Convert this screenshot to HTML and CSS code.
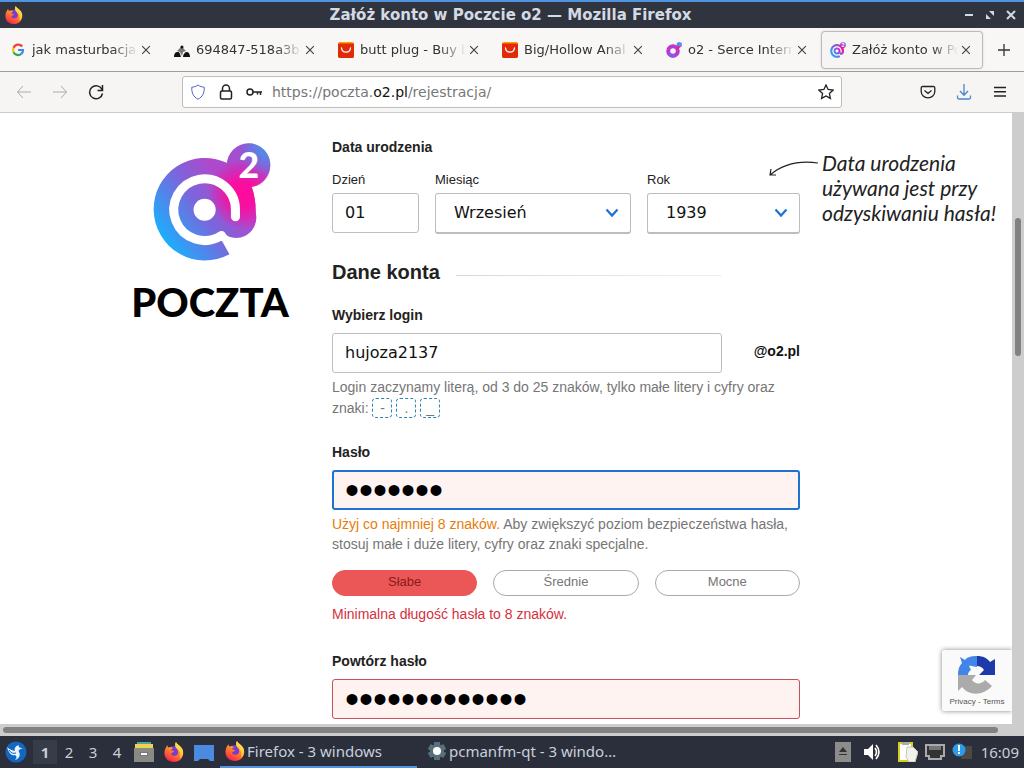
FILE: index.html
```html
<!DOCTYPE html>
<html lang="pl">
<head>
    <meta charset="utf-8">
    <title>Załóż konto w Poczcie o2</title>
    <link rel="stylesheet" href="styles.css">
</head>
<body>
    <!-- shared icons -->
    <svg width="0" height="0" class="defs" aria-hidden="true">
        <defs>
            <linearGradient id="ff-fire" x1="0.8" y1="0" x2="0.3" y2="1">
                <stop offset="0" stop-color="#fff04a"/>
                <stop offset="0.4" stop-color="#ff9a2a"/>
                <stop offset="0.8" stop-color="#ff4a3a"/>
                <stop offset="1" stop-color="#e8205a"/>
            </linearGradient>
            <linearGradient id="o2-base" gradientUnits="userSpaceOnUse" x1="120" y1="330" x2="400" y2="130">
                <stop offset="0" stop-color="#14b4ff"/>
                <stop offset="0.45" stop-color="#7a66dc"/>
                <stop offset="0.75" stop-color="#b048cc"/>
                <stop offset="1" stop-color="#a050d0"/>
            </linearGradient>
            <radialGradient id="o2-pink" gradientUnits="userSpaceOnUse" cx="368" cy="190" r="105">
                <stop offset="0" stop-color="#ff0a9c"/>
                <stop offset="0.4" stop-color="#ff0a9c" stop-opacity="0.9"/>
                <stop offset="1" stop-color="#ff0a9c" stop-opacity="0"/>
            </radialGradient>
            <radialGradient id="o2-blue" gradientUnits="userSpaceOnUse" cx="440" cy="50" r="85">
                <stop offset="0" stop-color="#3a9cf0"/>
                <stop offset="1" stop-color="#3a9cf0" stop-opacity="0"/>
            </radialGradient>
        </defs>
        <symbol id="firefox" viewBox="0 0 20 20">
            <circle cx="10" cy="11" r="7" fill="#7a3ccc"/>
            <path d="M12 0c1 3 6 4 7 9 1.200 6-3 11-9 11S0 16 .5 10C.7 7 2 5.500 3.500 3c0 1 .3 2 1 2.500C6 4.500 8 5 9 6.500c-1 .3-2 .8-2 2 1.500 0 3 .2 3 1.500-1 .5-3 .5-3 2 .5 2 5 2.500 6.500.5 1.500-2 .5-4.500-1-6C11 5 10.500 2 12 0z" fill="url(#ff-fire)"/>
            <path d="M12 0c1 3 6 4 7 9 .3 4-1 6-3 7.500 1-4 0-8-3-10C11 5 10.500 2 12 0z" fill="#ffe34a" opacity=".7"/>
        </symbol>
        <symbol id="close" viewBox="0 0 10 10">
            <path d="M1.200 1.200l7.600 7.600M8.800 1.200L1.200 8.800" stroke="#444" stroke-width="1.200" fill="none"/>
        </symbol>
        <symbol id="ali" viewBox="0 0 16 16">
            <rect width="16" height="16" rx="2" fill="#ff9a00"/>
            <path d="M0 1.500h16V14a2 2 0 0 1-2 2H2a2 2 0 0 1-2-2z" fill="#e02a08"/>
            <path d="M3.500 6c.5 5.500 8.500 5.500 9 0" stroke="#fff" stroke-width="1.300" fill="none" stroke-linecap="round"/>
        </symbol>
        <symbol id="chevron" viewBox="0 0 14 10">
            <path d="M1.500 1.500L7 7.500l5.500-6" stroke="#1d72d2" stroke-width="2.200" fill="none"/>
        </symbol>
        <symbol id="o2-at" viewBox="100 36 352 356">
            <g fill="url(#o2-base)">
                <path d="M328 370A153 153 0 1 1 322 98L395 172Q407 205 407 250A60 60 0 0 1 303 301V325z"/>
                <circle cx="385" cy="104" r="65"/>
            </g>
            <path d="M328 370A153 153 0 1 1 322 98A65 65 0 1 1 395 169Q407 205 407 250A60 60 0 0 1 303 301V325z" fill="url(#o2-pink)"/>
            <circle cx="385" cy="104" r="65" fill="url(#o2-blue)"/>
            <path d="M346 258V237A92 92 0 1 0 304 314" fill="none" stroke="#fff" stroke-width="27" stroke-linecap="round"/>
            <path d="M290 312l18-10 20 18-22 12z" fill="#fff"/>
            <circle cx="254" cy="237" r="33" fill="#fff"/>
            <text x="386" y="142" text-anchor="middle" class="logo-two">2</text>
        </symbol>
    </svg>

    <header class="titlebar">
        <svg class="title-icon"><use href="#firefox"/></svg>
        <span class="title">Załóż konto w Poczcie o2 — Mozilla Firefox</span>
        <div class="window-buttons">
            <button aria-label="Minimalizuj"><svg width="10" height="10"><path d="M1 5h8" stroke="#d3dae3" stroke-width="2"/></svg></button>
            <button aria-label="Maksymalizuj"><svg width="10" height="10" fill="#d3dae3"><path d="M4 1h5v5zM1 4v5h5z"/></svg></button>
            <button aria-label="Zamknij"><svg width="10" height="10"><path d="M1 1l8 8M9 1L1 9" stroke="#d3dae3" stroke-width="2"/></svg></button>
        </div>
    </header>

    <nav class="tabs">
        <div class="tab">
            <svg class="favicon" viewBox="0 0 16 16" fill="none" stroke-width="2.200">
                <path d="M12.200 4.500A5 5 0 0 0 3.600 5.800" stroke="#ea4335"/>
                <path d="M3.600 5.800a5 5 0 0 0 0 4.400" stroke="#fbbc05"/>
                <path d="M3.600 10.200a5 5 0 0 0 7.700 1.700" stroke="#34a853"/>
                <path d="M11.300 11.900A5 5 0 0 0 13 8H8" stroke="#4285f4"/>
            </svg>
            <span class="tab-label">jak masturbacja</span>
            <button class="tab-close" aria-label="Zamknij kartę"><svg><use href="#close"/></svg></button>
        </div>
        <div class="tab">
            <svg class="favicon" viewBox="0 0 16 16" fill="#111">
                <path d="M0 15c0-3 1-5 3.500-5S6 12 7 15zM9 15c0-3 2-5 4-5s3 3 3 5z"/>
                <path d="M7.500 3.500L9 6l3 3-3 1-1 4-2-4-3-1 3-3z" fill="#777"/>
                <circle cx="8" cy="5" r="1.500"/>
            </svg>
            <span class="tab-label">694847-518a3b</span>
            <button class="tab-close" aria-label="Zamknij kartę"><svg><use href="#close"/></svg></button>
        </div>
        <div class="tab">
            <svg class="favicon"><use href="#ali"/></svg>
            <span class="tab-label">butt plug - Buy b</span>
            <button class="tab-close" aria-label="Zamknij kartę"><svg><use href="#close"/></svg></button>
        </div>
        <div class="tab">
            <svg class="favicon"><use href="#ali"/></svg>
            <span class="tab-label">Big/Hollow Anal</span>
            <button class="tab-close" aria-label="Zamknij kartę"><svg><use href="#close"/></svg></button>
        </div>
        <div class="tab">
            <svg class="favicon" viewBox="0 0 16 16">
                <circle cx="7" cy="9" r="4.800" fill="none" stroke="#b53ccf" stroke-width="4"/>
                <path d="M3 12a5 5 0 0 0 6 1.500" fill="none" stroke="#8a5ae8" stroke-width="3.500"/>
                <circle cx="13.300" cy="2.800" r="2.700" fill="#5b8fe8"/>
                <path d="M11 7l2-3" stroke="#f0209c" stroke-width="3"/>
            </svg>
            <span class="tab-label">o2 - Serce Intern</span>
            <button class="tab-close" aria-label="Zamknij kartę"><svg><use href="#close"/></svg></button>
        </div>
        <div class="tab active">
            <svg class="favicon"><use href="#o2-at"/></svg>
            <span class="tab-label">Załóż konto w Po</span>
            <button class="tab-close" aria-label="Zamknij kartę"><svg><use href="#close"/></svg></button>
        </div>
        <button class="new-tab" aria-label="Nowa karta"><svg width="12" height="12"><path d="M6 0v12M0 6h12" stroke="#333" stroke-width="1.300"/></svg></button>
    </nav>

    <div class="toolbar">
        <div class="tools">
            <button class="tool" aria-label="Wstecz" disabled><svg viewBox="0 0 16 16" stroke="#aaa"><path d="M15 8H1.500M7 2L1.500 8 7 14"/></svg></button>
            <button class="tool" aria-label="Do przodu" disabled><svg viewBox="0 0 16 16" stroke="#aaa"><path d="M1 8h13.500M9 2l5.500 6L9 14"/></svg></button>
            <button class="tool" aria-label="Odśwież"><svg viewBox="0 0 16 16" stroke="#222" stroke-width="1.500"><path d="M14 5.500A6.500 6.500 0 1 0 14.500 9.500M14.500 1v5.500H9.500"/></svg></button>
        </div>
        <div class="urlbar">
            <svg viewBox="0 0 16 16" stroke="#5563c8"><path d="M8 1C6 2.500 4 3 1.800 3.200 1.500 9 3.500 13 8 15.200 12.500 13 14.500 9 14.200 3.200 12 3 10 2.500 8 1z"/></svg>
            <svg viewBox="0 0 16 16" stroke="#222" stroke-width="1.500"><rect x="2.500" y="7" width="11" height="8" rx="1.500"/><path d="M4.500 7V4.500a3.500 3.500 0 0 1 7 0V7"/></svg>
            <svg viewBox="0 0 16 16" stroke="#222" stroke-width="1.500"><circle cx="4" cy="8" r="3"/><path d="M7 8h9M11.500 8v2.500M14.500 8v3"/></svg>
            <span class="address">https://poczta.<b>o2.pl</b>/rejestracja/</span>
            <svg viewBox="0 0 16 16" stroke="#222" stroke-width="1.300"><path d="M8 1l2.100 4.500 5 .6-3.700 3.400 1 4.900L8 12l-4.400 2.400 1-4.900L.9 6.100l5-.6z"/></svg>
        </div>
        <div class="tools">
            <button class="tool" aria-label="Pocket"><svg viewBox="0 0 16 16" stroke="#222" stroke-width="1.300"><path d="M2.500 2.500h11a1.300 1.300 0 0 1 1.300 1.300V7.500a6.800 6.300 0 0 1-13.600 0V3.800a1.300 1.300 0 0 1 1.300-1.300zM4.500 6.500L8 9.500l3.500-3"/></svg></button>
            <button class="tool" aria-label="Pobrane"><svg viewBox="0 0 16 16" stroke="#4a84cc" stroke-width="1.300"><path d="M8 0v11M4 7l4 4.200L12 7M1.500 11.500v2a1.500 1.500 0 0 0 1.500 1.500h10a1.500 1.500 0 0 0 1.500-1.500v-2"/></svg></button>
            <button class="tool" aria-label="Menu"><svg viewBox="0 0 16 16" stroke="#222" stroke-width="1.500"><path d="M2 3.500h12M2 7.800h12M2 12.100h12"/></svg></button>
        </div>
    </div>

    <div class="viewport">
        <main class="page">
            <div class="brand">
                <svg class="brand-logo"><use href="#o2-at"/></svg>
                <span class="brand-name">POCZTA</span>
            </div>

            <form class="form">
                <fieldset class="birth">
                    <legend>Data urodzenia</legend>
                    <div class="birth-row">
                        <div class="birth-field day">
                            <label for="day">Dzień</label>
                            <input id="day" class="control" type="text" value="01">
                        </div>
                        <div class="birth-field month">
                            <label for="month">Miesiąc</label>
                            <div class="select">
                                <select id="month" class="control"><option>Wrzesień</option></select>
                                <svg><use href="#chevron"/></svg>
                            </div>
                        </div>
                        <div class="birth-field year">
                            <label for="year">Rok</label>
                            <div class="select">
                                <select id="year" class="control"><option>1939</option></select>
                                <svg><use href="#chevron"/></svg>
                            </div>
                        </div>
                    </div>
                </fieldset>

                <h2 class="section">Dane konta</h2>

                <div class="field">
                    <label for="login">Wybierz login</label>
                    <div class="login-row">
                        <input id="login" class="control" type="text" value="hujoza2137">
                        <span class="domain">@o2.pl</span>
                    </div>
                    <p class="hint">Login zaczynamy literą, od 3 do 25 znaków, tylko małe litery i cyfry oraz znaki: <kbd>-</kbd> <kbd>.</kbd> <kbd>_</kbd></p>
                </div>

                <div class="field">
                    <label for="password">Hasło</label>
                    <input id="password" class="control secret focused" type="password" value="1234567">
                    <p class="hint"><span class="warn">Użyj co najmniej 8 znaków.</span> Aby zwiększyć poziom bezpieczeństwa hasła, stosuj małe i duże litery, cyfry oraz znaki specjalne.</p>
                    <div class="strength">
                        <span class="weak">Słabe</span>
                        <span>Średnie</span>
                        <span>Mocne</span>
                    </div>
                    <p class="error">Minimalna długość hasła to 8 znaków.</p>
                </div>

                <div class="field">
                    <label for="repeat">Powtórz hasło</label>
                    <input id="repeat" class="control secret invalid" type="password" value="1234567890123">
                </div>
            </form>

            <aside class="note">
                <svg class="note-arrow" viewBox="0 0 50 18"><path d="M49 3Q20-1 1 15M2 9L1 15l6 0" fill="none" stroke="#222" stroke-width="1.200"/></svg>
                Data urodzenia<br>używana jest przy<br>odzyskiwaniu hasła!
            </aside>

            <div class="recaptcha">
                <svg viewBox="0 0 38 38">
                    <path d="M19 0C13 0 9 1 7 4L2 1l2 6C1 10 0 14 0 19h10c0-2 1-4 3-5l-2-4c3-1 5 1 8 1z" fill="#4285e8"/>
                    <path d="M19 0c6 0 10 2 13 6l5-3v16H21l5-5c-2-3-4-4-7-4z" fill="#1c3aa9"/>
                    <path d="M0 19v16l4-4c8 10 22 8 30-1l-7-6c-4 5-10 4-13 0l4-5z" fill="#ababab"/>
                </svg>
                <div><a href="#">Privacy</a> - <a href="#">Terms</a></div>
            </div>
        </main>
        <div class="scroll-y"><div class="thumb-y"></div></div>
        <div class="scroll-x"><div class="thumb-x"></div></div>
    </div>

    <footer class="taskbar">
        <button class="start" aria-label="Menu">
            <svg viewBox="0 0 22 22"><circle cx="11" cy="11" r="10.500" fill="#1268c0"/><path d="M2 6c3 3 5 3 8 4-1-2 0-5 4-6-1 2 0 3 4 3-3 1-5 2-4 4 2 3 0 7-4 8 2-2 2-4 0-5-3 1-6-1-8-8z" fill="#e8f4ff"/><path d="M4 9c2 3 4 4 7 3M15 10c3 2 2 5 0 7" stroke="#1268c0" fill="none"/></svg>
        </button>
        <div class="desktops">
            <button class="current">1</button><button>2</button><button>3</button><button>4</button>
        </div>
        <div class="launchers">
            <button aria-label="Pliki"><svg viewBox="0 0 20 20"><path d="M3 0h14v3H3z" fill="#49a6a0"/><path d="M1 2h18v5H1z" fill="#f3cf52"/><path d="M0 6h20v14H0z" fill="#888a85"/><path d="M6 10h8v4H6z" fill="#777"/><path d="M7 11h6v2H7z" fill="#fff"/></svg></button>
            <button aria-label="Firefox"><svg><use href="#firefox"/></svg></button>
            <button aria-label="Pulpit"><svg viewBox="0 0 20 20"><path d="M0 3h20v16h-4l-2-2H6l-2 2H0z" fill="#4a8be0"/></svg></button>
        </div>
        <button class="task active"><svg><use href="#firefox"/></svg>Firefox - 3 windows</button>
        <button class="task"><svg viewBox="0 0 20 20"><circle cx="10" cy="10" r="7" fill="#56707c"/><path d="M10 1v18M2.200 5.500l15.600 9M2.200 14.500l15.600-9" stroke="#56707c" stroke-width="6"/><circle cx="10" cy="10" r="4" fill="#fff"/></svg>pcmanfm-qt - 3 windo…</button>
        <div class="tray">
            <svg class="eject" viewBox="0 0 20 20"><path d="M2 0h16v20H2z" fill="#8c8c8c"/><path d="M6 10l4-5 4 5zM6 12h8v1H6z" fill="#333"/></svg>
            <svg class="volume" viewBox="0 0 20 20"><path d="M2 7h4l5-5v16l-5-5H2z" fill="#fff"/><path d="M13 6q3 4 0 8M14 3q6 7 0 14" stroke="#fff" stroke-width="1.600" fill="none"/></svg>
            <svg viewBox="0 0 20 20"><path d="M1 1h13v18H1z" fill="#fff" stroke="#d8ce22" stroke-width="2"/><path d="M4 0h7v3H4z" fill="#aaa"/><path d="M9 5h6l5 5-3 10h-6L8 15z" fill="#f2f2ec" stroke="#c8c8bc"/></svg>
            <svg viewBox="0 0 20 20"><path d="M1 3h18v11h-3v3H4v-3H1z" fill="#333" stroke="#aaa" stroke-width="2"/><path d="M5 4v4M7 4v4M9 4v4M11 4v4M13 4v4M15 4v4" stroke="#bbb"/></svg>
            <svg viewBox="0 0 20 20"><path d="M9 4h11v13H9z" fill="#4c4844"/><circle cx="7" cy="8" r="6.500" fill="#2d9be8"/><path d="M7 3v6M7 10v2" stroke="#fff" stroke-width="2"/></svg>
        </div>
        <time class="clock">16:09</time>
    </footer>
</body>
</html>
```
FILE: styles.css
```css
* {
    box-sizing: border-box;
}

html, body {
    height: 100%;
    margin: 0;
}

body {
    display: flex;
    flex-direction: column;
    overflow: hidden;
    font-family: "Liberation Sans", Arial, sans-serif;
    font-size: 14px;
    color: #222;
}

button {
    padding: 0;
    border: none;
    background: none;
    font: inherit;
    color: inherit;
    display: flex;
    align-items: center;
    justify-content: center;
}

.defs {
    position: absolute;
}

/* window */
.titlebar {
    flex: none;
    height: 28px;
    display: grid;
    grid-template-columns: 1fr auto 1fr;
    align-items: center;
    padding: 0 8px 0 5px;
    background: #2f343f;
    border-top: 2px solid #5294e2;
    font: bold 15px "DejaVu Sans", sans-serif;
    color: #d3dae3;
}

.title-icon {
    width: 18px;
    height: 18px;
}

.window-buttons {
    display: flex;
    justify-content: flex-end;
    gap: 11px;
}

.tabs {
    flex: none;
    height: 44px;
    display: flex;
    align-items: center;
    gap: 2px;
    padding: 0 1px;
    background: #f8f7f6;
    border-bottom: 1px solid #9b9b97;
    font: 13px "DejaVu Sans", sans-serif;
    color: #333;
}

.tab {
    flex: 0 1 162px;
    min-width: 0;
    height: 38px;
    display: flex;
    align-items: center;
    padding: 0 8px;
    border: 1px solid transparent;
    border-radius: 4px;
}

.tab.active {
    background: #f6f5f4;
    border-color: #bbb;
    box-shadow: 0 0 2px #ccc;
}

.favicon {
    flex: none;
    width: 16px;
    height: 16px;
    margin-right: 6px;
}

.tab-label {
    flex: 1;
    overflow: hidden;
    line-height: 20px;
    white-space: nowrap;
    -webkit-mask-image: linear-gradient(to left, transparent, #000 26px);
    mask-image: linear-gradient(to left, transparent, #000 26px);
}

.tab-close {
    width: 16px;
}

.tab-close svg {
    width: 10px;
    height: 10px;
}

.new-tab {
    flex: 1;
}

.toolbar {
    flex: none;
    height: 41px;
    display: flex;
    align-items: center;
    gap: 68px;
    padding: 0 6px;
    background: #f6f5f4;
    border-bottom: 1px solid #ccc;
}

.tools {
    display: flex;
}

.tool {
    width: 36px;
    height: 32px;
}

.tool svg, .urlbar svg {
    flex: none;
    width: 16px;
    height: 16px;
    fill: none;
}

.urlbar {
    flex: 1;
    height: 32px;
    display: flex;
    align-items: center;
    gap: 12px;
    padding: 0 7px;
    background: #fff;
    border: 1px solid #bdbdbb;
    border-radius: 3px;
    font: 14px "DejaVu Sans", sans-serif;
    color: #777;
}

.address {
    flex: 1;
    margin-left: -2px;
}

.address b {
    font-weight: normal;
    color: #111;
}

/* page and its scrollbars */
.viewport {
    flex: 1;
    min-height: 0;
    display: grid;
    grid-template: minmax(0, 1fr) 12px / minmax(0, 1fr) 12px;
    background: #cdcdcd;
}

.page {
    position: relative;
    overflow: hidden;
    display: flex;
    align-items: flex-start;
    padding-left: 132px;
    background: #fff;
}

.scroll-y {
    padding: 105px 3px 0;
}

.thumb-y {
    height: 138px;
    border-radius: 3px;
    background: #7f8281;
}

.scroll-x {
    padding: 3px 14px 3px 3px;
    grid-column: 1 / 3;
}

.thumb-x {
    height: 6px;
    margin-right: 12px;
    border-radius: 3px;
    background: #7f8281;
}

.brand {
    flex: none;
    width: 156px;
    margin-right: 44px;
    padding-top: 29px;
    display: flex;
    flex-direction: column;
    align-items: center;
}

.brand-logo {
    width: 118px;
    height: 120px;
    margin-left: 4px;
}

.logo-two {
    font: 900 106px Lato, sans-serif;
    fill: #fff;
}

.brand-name {
    margin-top: 16px;
    font: 900 40px/48px Lato, sans-serif;
    color: #000;
}

.form {
    flex: 0 1 468px;
    padding-top: 24px;
}

fieldset {
    min-width: 0;
    margin: 0;
    padding: 0;
    border: none;
}

legend, .field > label {
    display: block;
    padding: 0;
    font-weight: bold;
    line-height: 20px;
}

.birth-row {
    display: flex;
    gap: 16px;
    margin-top: 13px;
}

.birth-field label {
    display: block;
    margin-bottom: 3px;
    font-size: 13px;
    line-height: 20px;
}

.day {
    flex: 87;
    min-width: 0;
}

.month {
    flex: 196;
}

.year {
    flex: 153;
}

.control {
    display: block;
    width: 100%;
    height: 40px;
    padding: 0 12px 2px;
    border: 1px solid #bdbdbd;
    border-radius: 3px;
    background: #fff;
    font: 16px "DejaVu Sans", sans-serif;
    color: #111;
    outline: none;
}

.select {
    position: relative;
}

.select .control {
    height: 41px;
    padding: 0 18px 2px;
    border-bottom-width: 2px;
    appearance: none;
}

.select svg {
    position: absolute;
    right: 12px;
    top: 15px;
    width: 14px;
    height: 10px;
    pointer-events: none;
}

.section {
    display: flex;
    align-items: center;
    gap: 16px;
    margin: 24px 78px 19px 0;
    font-size: 20px;
    line-height: 28px;
}

.section::after {
    content: "";
    flex: 1;
    height: 1px;
    margin-top: 6px;
    background: linear-gradient(to right, #d8d8d8, #f0f0f0);
}

.field {
    margin-bottom: 24px;
}

.field > label {
    margin-bottom: 8px;
}

.login-row {
    display: flex;
    align-items: center;
    justify-content: space-between;
}

.login-row .control {
    width: 390px;
}

.domain {
    padding-bottom: 4px;
    font-weight: bold;
    color: #111;
}

.hint {
    margin: 4px 0 0;
    line-height: 20px;
    color: #767676;
}

kbd {
    display: inline-block;
    width: 20px;
    height: 20px;
    margin-top: 1px;
    border: 1px dashed #2f82a8;
    border-radius: 4px;
    font: 14px/18px "Liberation Sans", Arial, sans-serif;
    text-align: center;
}

.warn {
    color: #e57c0b;
}

.error {
    margin: 8px 0 27px;
    line-height: 20px;
    color: #d5303e;
}

/* bullets are sized by the font */
.secret {
    padding-bottom: 0;
    background: #fff3f2;
    font: 40px/38px "Liberation Sans", Arial, sans-serif;
    color: #000;
}

.focused {
    border: 2px solid #1d72d2;
    padding: 0 11px;
}

.invalid {
    border-color: #c8505a;
}

.strength {
    display: grid;
    grid-template-columns: repeat(3, 1fr);
    gap: 16px;
    margin-top: 16px;
}

.strength span {
    height: 26px;
    border: 1px solid #aaa;
    border-radius: 13px;
    font-size: 13px;
    line-height: 22px;
    text-align: center;
    color: #767676;
}

.strength .weak {
    background: #eb5757;
    border-color: #eb5757;
    color: #8c1a1a;
}

.note {
    position: relative;
    flex: none;
    margin: 37px 0 0 22px;
    font: italic 21px/25px Lato, sans-serif;
    white-space: nowrap;
}

.note-arrow {
    position: absolute;
    left: -53px;
    top: 10px;
    width: 50px;
    height: 18px;
}

.recaptcha {
    position: absolute;
    right: 0;
    bottom: 13px;
    width: 70px;
    height: 61px;
    padding-top: 6px;
    background: #fafafa;
    border-radius: 2px 0 0 2px;
    box-shadow: 0 0 5px #888;
    font-size: 8px;
    line-height: 12px;
    text-align: center;
    color: #555;
}

.recaptcha svg {
    display: block;
    width: 38px;
    height: 38px;
    margin: 0 auto 2px;
}

.recaptcha a {
    color: inherit;
    text-decoration: none;
}

/* desktop panel */
.taskbar {
    flex: none;
    height: 32px;
    display: flex;
    align-items: center;
    padding: 0 5px;
    background: #2b2f3b;
    font: 15px "Noto Sans", sans-serif;
    color: #c8cfdb;
}

.taskbar svg {
    flex: none;
    width: 20px;
    height: 20px;
}

.start {
    margin-right: 6px;
}

.taskbar .start svg {
    width: 22px;
    height: 22px;
}

.desktops {
    display: flex;
}

.desktops button {
    width: 24px;
    height: 24px;
}

.desktops .current {
    background: #373c49;
    font-weight: bold;
}

.launchers {
    display: flex;
    gap: 10px;
    margin: 0 6px 0 5px;
}

.task {
    flex: 0 1 197px;
    height: 32px;
    justify-content: flex-start;
    gap: 2px;
    padding: 0 5px;
    border-bottom: 2px solid transparent;
    white-space: nowrap;
}

.task + .task {
    margin-left: 5px;
}

.task.active {
    border-color: #5294e2;
}

.tray {
    display: flex;
    gap: 7px;
    margin-left: auto;
}

.taskbar .eject {
    margin-right: 2px;
}

.taskbar .volume {
    margin-right: 9px;
}

.clock {
    margin-left: 9px;
}
```
